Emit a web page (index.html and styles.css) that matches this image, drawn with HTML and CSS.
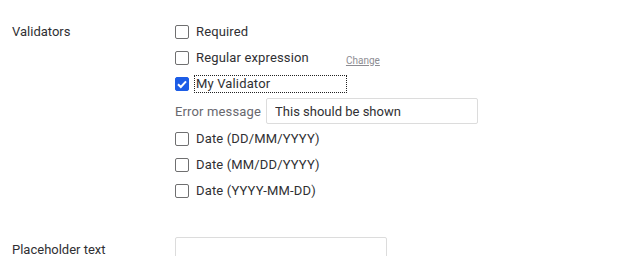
FILE: index.html
```html
<!DOCTYPE html>
<html lang="en">
<head>
    <meta charset="UTF-8">
    <title>Validators</title>
    <link rel="stylesheet" href="styles.css">
</head>
<body>
    <!-- Validators -->
    <div class="row validators">
        <div class="label">Validators</div>
        <div class="controls">
            <div class="check-item"><span class="box"></span><span class="text">Required</span></div>
            <div class="check-item"><span class="box"></span><span class="text">Regular expression</span><a class="change" href="#">Change</a></div>
            <div class="check-item"><span class="box checked"><svg width="14" height="14" viewBox="0 0 14 14"><path d="M3 7.2 L5.8 10 L11 4.3" fill="none" stroke="#fff" stroke-width="2"/></svg></span><span class="text focused">My Validator</span></div>
            <div class="error-row">
                <span class="error-label">Error message</span>
                <input class="error-input" type="text" value="This should be shown">
            </div>
            <div class="check-item"><span class="box"></span><span class="text">Date (DD/MM/YYYY)</span></div>
            <div class="check-item"><span class="box"></span><span class="text">Date (MM/DD/YYYY)</span></div>
            <div class="check-item"><span class="box"></span><span class="text">Date (YYYY-MM-DD)</span></div>
        </div>
    </div>

    <!-- Placeholder -->
    <div class="row placeholder">
        <div class="label">Placeholder text</div>
        <div class="controls">
            <input class="text-input" type="text">
        </div>
    </div>
</body>
</html>
```

FILE: styles.css
```css
* {
    margin: 0;
    padding: 0;
    box-sizing: border-box;
}

body {
    font-family: Roboto, "Liberation Sans", sans-serif;
    font-size: 13px;
    color: #303033;
    background: #fff;
    overflow: hidden;
}

.row {
    display: flex;
    padding-left: 12px;
}

.label {
    width: 163px;
    flex-shrink: 0;
}

.validators {
    padding-top: 23px;
}

.validators .label {
    line-height: 17px;
}

.check-item {
    display: flex;
    align-items: center;
    height: 26px;
    margin-top: -4px;
    margin-bottom: 4px;
}

.box {
    width: 14px;
    height: 14px;
    border: 1px solid #6f6f70;
    border-radius: 2px;
    margin-right: 5px;
    flex-shrink: 0;
    display: flex;
}

.box.checked {
    background: #1d5de6;
    border-color: #1d5de6;
}

.box.checked svg {
    margin: -1px;
}

.text {
    line-height: 16px;
    padding: 0 1px;
    border: 1px dotted transparent;
    letter-spacing: 0.15px;
}

.text.focused {
    border-color: #222;
    width: 153px;
}

.change {
    font-size: 10px;
    color: #8d8d93;
    margin-left: 35px;
    margin-top: 4px;
}

.error-row {
    display: flex;
    align-items: center;
    height: 26px;
    margin-top: -3px;
    margin-bottom: 6px;
}

.error-label {
    color: #68686e;
    margin-right: 5px;
    letter-spacing: 0.15px;
}

.error-input {
    width: 212px;
    height: 26px;
    border: 1px solid #dcdcdc;
    border-radius: 2px;
    padding: 0 8px;
    font-family: Roboto, "Liberation Sans", sans-serif;
    font-size: 13px;
    color: #303033;
    outline: none;
}

.placeholder {
    padding-top: 29px;
}

.placeholder .label {
    padding-top: 5px;
}

.text-input {
    width: 212px;
    height: 26px;
    border: 1px solid #dcdcdc;
    border-radius: 2px;
}
```
